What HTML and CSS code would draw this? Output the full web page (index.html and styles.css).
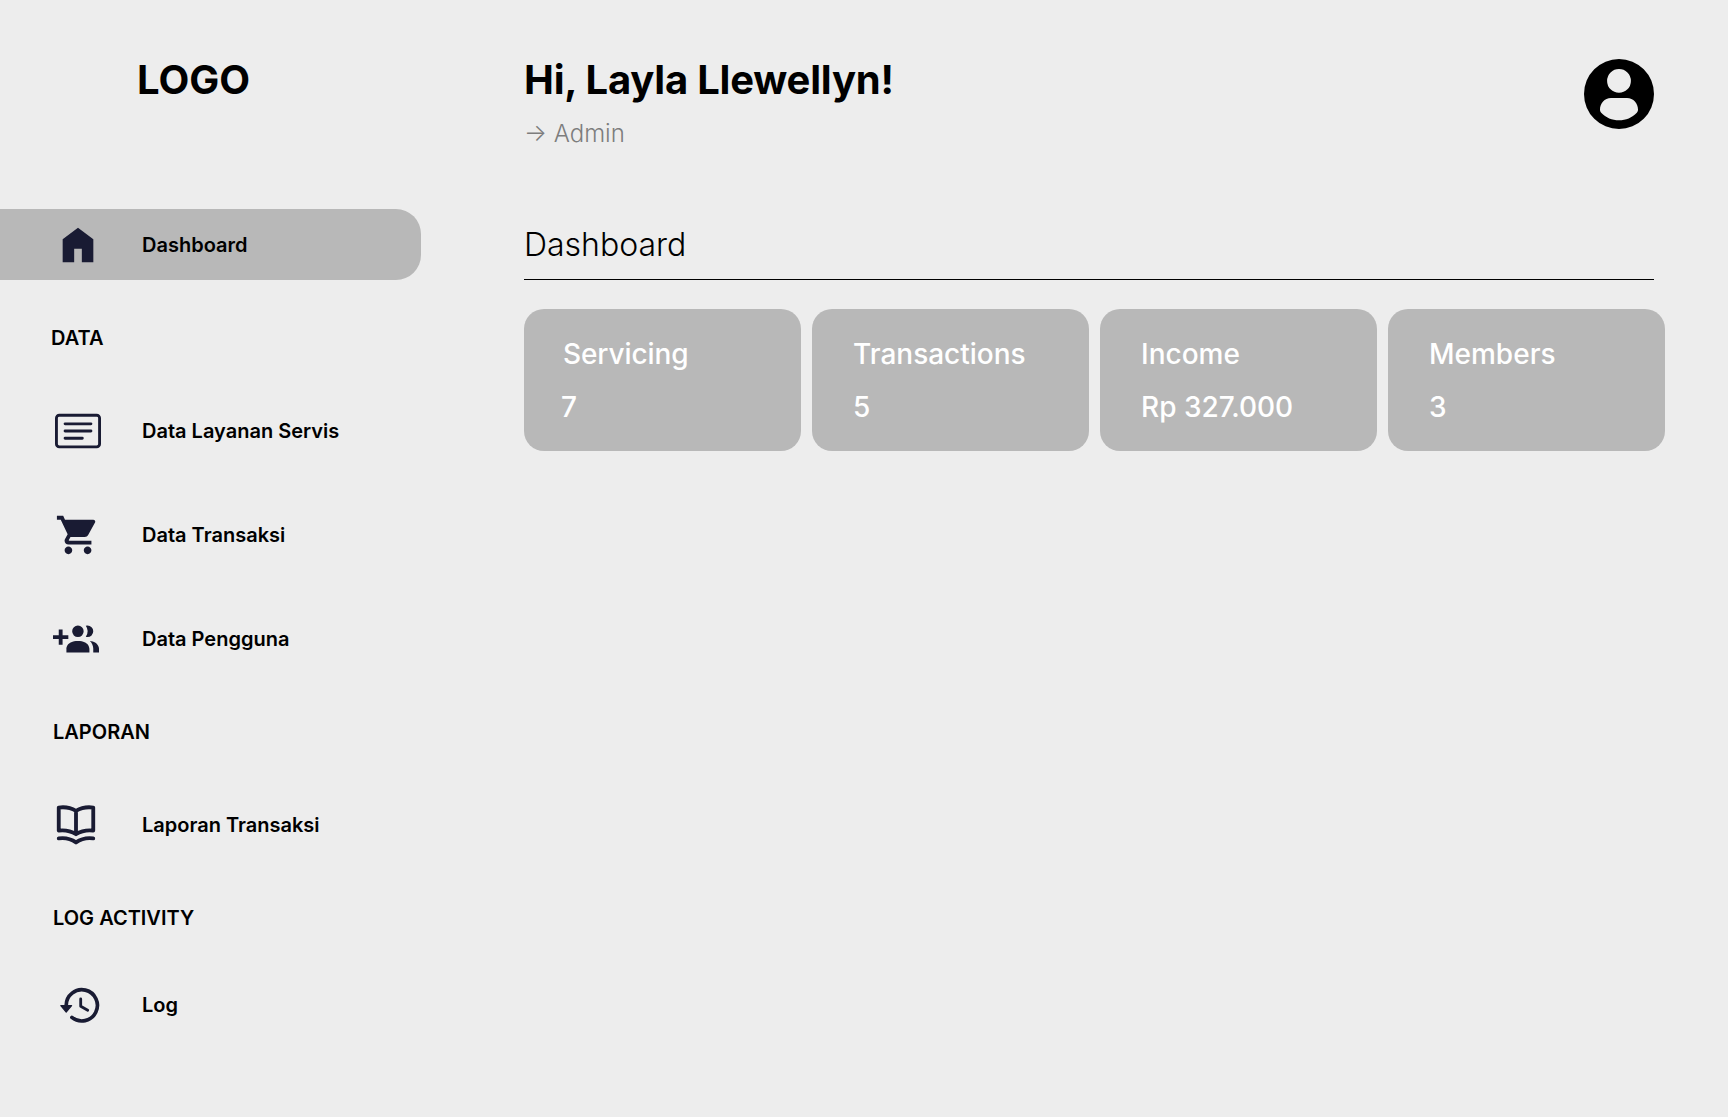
FILE: index.html
```html
<!DOCTYPE html>
<html lang="id">
<head>
<meta charset="utf-8">
<title>Dashboard</title>
<link rel="stylesheet" href="styles.css">
</head>
<body>
<div class="layout">
  <aside class="sidebar">
    <div class="logo">LOGO</div>
    <nav class="nav">
      <a class="item active">
        <span class="icon icon-home"><svg width="46" height="46" viewBox="0 0 24 24"><path d="M4 21V9l8-6 8 6v12h-6v-7h-4v7z"/></svg></span>
        <span class="label">Dashboard</span>
      </a>
      <h2 class="group group-first">DATA</h2>
      <div class="items">
        <a class="item">
          <span class="icon icon-card"><svg width="46" height="46" viewBox="0 0 16 16"><path d="M14.5 3a.5.5 0 0 1 .5.5v9a.5.5 0 0 1-.5.5h-13a.5.5 0 0 1-.5-.5v-9a.5.5 0 0 1 .5-.5zm-13-1A1.5 1.5 0 0 0 0 3.500v9A1.500 1.500 0 0 0 1.500 14h13a1.500 1.500 0 0 0 1.500-1.500v-9A1.500 1.500 0 0 0 14.500 2z"/><path d="M3 5.500a.5.5 0 0 1 .5-.5h9a.5.5 0 0 1 0 1h-9a.5.5 0 0 1-.5-.5M3 8a.5.5 0 0 1 .5-.5h9a.5.5 0 0 1 0 1h-9A.5.5 0 0 1 3 8m0 2.500a.5.5 0 0 1 .5-.5h6a.5.5 0 0 1 0 1h-6a.5.5 0 0 1-.5-.5"/></svg></span>
          <span class="label">Data Layanan Servis</span>
        </a>
        <a class="item">
          <span class="icon icon-cart"><svg width="46" height="46" viewBox="0 0 24 24"><path d="M7 18c-1.100 0-1.990.9-1.990 2S5.900 22 7 22s2-.9 2-2-.9-2-2-2zM1 2v2h2l3.600 7.590-1.350 2.450c-.16.28-.25.61-.25.96 0 1.100.9 2 2 2h12v-2H7.420c-.14 0-.25-.11-.25-.25l.03-.12.9-1.630h7.450c.75 0 1.410-.41 1.750-1.030l3.580-6.490c.08-.14.12-.31.12-.48 0-.55-.45-1-1-1H5.210l-.94-2H1zm16 16c-1.100 0-1.990.9-1.990 2s.89 2 1.990 2 2-.9 2-2-.9-2-2-2z"/></svg></span>
          <span class="label">Data Transaksi</span>
        </a>
        <a class="item">
          <span class="icon icon-users"><svg width="46" height="46" viewBox="0 0 24 24"><path d="M19 17v2H7v-2s0-4 6-4 6 4 6 4m-3-9a3 3 0 1 0-3 3 3 3 0 0 0 3-3m3.200 5.060A5.600 5.600 0 0 1 21 17v2h3v-2s0-3.450-4.800-3.940M18 5a2.900 2.900 0 0 0-.89.14 5 5 0 0 1 0 5.720A2.900 2.900 0 0 0 18 11a3 3 0 0 0 0-6M8 10H5V7H3v3H0v2h3v3h2v-3h3z"/></svg></span>
          <span class="label">Data Pengguna</span>
        </a>
      </div>
      <h2 class="group">LAPORAN</h2>
      <a class="item">
        <span class="icon icon-book"><svg class="line" width="46" height="46" viewBox="0 0 24 24"><path d="M3 2.900C6.500 2.400 9.300 3 12 4.600 14.700 3 17.500 2.400 21 2.900V14.900C17.500 14.500 14.700 15.100 12 16.800 9.300 15.100 6.500 14.500 3 14.900ZM12 4.600v12"/><path d="M3 19c3.500-.5 6.300.2 9 2.100 2.700-1.900 5.500-2.600 9-2.100"/></svg></span>
        <span class="label">Laporan Transaksi</span>
      </a>
      <h2 class="group group-last">LOG ACTIVITY</h2>
      <a class="item">
        <span class="icon icon-log"><svg class="line history" width="46" height="46" viewBox="0 0 46 46"><path d="M9.200 24.500V23.300A15.600 15.600 0 1 1 14.900 35.400"/><path class="hands" d="M23.700 17v7.300l7 4"/><path class="solid" d="M3.800 23.700h10.800L9.200 30z"/></svg></span>
        <span class="label">Log</span>
      </a>
    </nav>
  </aside>
  <main class="main">
    <header class="header">
      <div>
        <h1 class="greeting">Hi, Layla Llewellyn!</h1>
        <p class="role">→ Admin</p>
      </div>
      <svg class="avatar" width="70" height="70" viewBox="0 0 70 70"><path fill-rule="evenodd" d="M35 0a35 35 0 1 1 0 70 35 35 0 0 1 0-70zM35 10a11.900 11.900 0 1 0 0 23.800 11.900 11.900 0 0 0 0-23.800zM27 39C20.500 39 16 44.500 16 50.500c0 1.500.4 2.300 1.200 3.200C22 58.700 28 61.200 35 61.200s13-2.500 17.800-7.500c.8-.9 1.200-1.700 1.200-3.200C54 44.500 49.500 39 43 39z"/></svg>
    </header>
    <h2 class="title">Dashboard</h2>
    <section class="cards">
      <article class="card card-servicing"><h3>Servicing</h3><p>7</p></article>
      <article class="card"><h3>Transactions</h3><p>5</p></article>
      <article class="card"><h3>Income</h3><p>Rp 327.000</p></article>
      <article class="card"><h3>Members</h3><p>3</p></article>
    </section>
  </main>
</div>
</body>
</html>
```
FILE: styles.css
```css
* { box-sizing: border-box; }
body {
  margin: 0;
  background: #ededed;
  color: #000;
  font-family: Inter, "Liberation Sans", sans-serif;
}
h1, h2, h3, p { margin: 0; font-size: inherit; font-weight: inherit; }
.layout { display: flex; min-height: 1117px; }

.sidebar { width: 421px; flex: none; padding-top: 56px; }
.logo {
  padding-left: 137px;
  height: 153px;
  font-size: 40px;
  line-height: 48px;
  font-weight: 700;
}
.nav { font-size: 20px; line-height: 25px; font-weight: 600; }
.items { display: flex; flex-direction: column; gap: 33px; }
.item { display: flex; align-items: center; height: 71px; }
.active { background: #b8b8b8; border-radius: 0 25px 25px 0; }
.icon { width: 142px; flex: none; display: flex; padding-top: 1px; fill: #191b33; }
.icon-home { padding-left: 55px; }
.icon-card { padding-left: 55px; }
.icon-cart { padding-left: 55px; }
.icon-users { padding-left: 53px; }
.icon-book { padding-left: 53px; }
.icon-log { padding-left: 57px; }
.label { padding-top: 2px; }
.line { fill: none; stroke: #191b33; stroke-width: 2; stroke-linecap: round; stroke-linejoin: round; }
.history { stroke-width: 3.7; }
.hands { stroke-width: 2.8; }
.solid { fill: #191b33; stroke-width: 1.2; }
.group { margin: 46px 0 44px; padding-left: 53px; line-height: 25px; }
.group-first { padding-left: 51px; }
.group-last { margin-bottom: 38px; }

.main { width: 1141px; margin-left: 103px; padding-top: 56px; }
.header { display: flex; justify-content: space-between; width: 1130px; height: 161px; }
.greeting { font-size: 40px; line-height: 48px; font-weight: 700; letter-spacing: -0.2px; }
.role { margin-top: 15px; font-size: 24px; line-height: 29px; font-weight: 300; color: #7d7d7d; }
.avatar { margin-top: 3px; }
.title {
  width: 1130px;
  height: 63px;
  padding-top: 8px;
  border-bottom: 1px solid #000;
  font-size: 32px;
  line-height: 39px;
  font-weight: 300;
}
.cards { display: grid; grid-template-columns: repeat(4, 277px); gap: 11px; margin-top: 29px; }
.card {
  height: 142px;
  padding: 28px 0 0 41px;
  border-radius: 20px;
  background: #b8b8b8;
  color: #fff;
  font-size: 28px;
  line-height: 34px;
  font-weight: 500;
}
.card p { margin-top: 19px; }
.card-servicing { padding-left: 37px; }
.card-servicing h3 { padding-left: 2px; letter-spacing: -0.1px; }
```
